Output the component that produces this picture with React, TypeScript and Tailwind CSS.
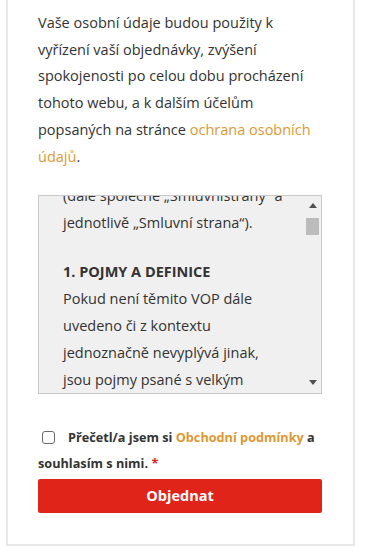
const Terms: React.FC = () => {
  return (
    <div className="flex h-[199px] border border-[#c9c9c9] bg-[#f0f0f0]">
      <div className="flex-1 overflow-hidden pl-[24px] pr-[24px]">
        <div className="-mt-[14px] text-[14.5px] leading-[27px] text-[#333]">
          <p className="whitespace-nowrap">(dále společně „Smluvnistrany“ a</p>
          <p>jednotlivě „Smluvní strana“).</p>
          <p className="mt-[22px] font-bold">1. POJMY A DEFINICE</p>
          <p>
            Pokud není těmito VOP dále uvedeno či z kontextu jednoznačně nevyplývá jinak, jsou
            pojmy psané s velkým počátečním písmenem vykládány takto:
          </p>
        </div>
      </div>
      <div className="flex w-[17px] flex-col items-center">
        <div className="flex h-[17px] w-full items-center justify-center pt-[1px]">
          <svg width="8" height="5" viewBox="0 0 8 5">
            <path d="M0 5 L4 0 L8 5 Z" fill="#505050" />
          </svg>
        </div>
        <div className="mt-[5px] h-[17px] w-[13px] bg-[#bcbcbc]" />
        <div className="flex-1" />
        <div className="flex h-[17px] w-full items-center justify-center pb-[4px]">
          <svg width="8" height="5" viewBox="0 0 8 5">
            <path d="M0 0 L8 0 L4 5 Z" fill="#505050" />
          </svg>
        </div>
      </div>
    </div>
  );
};

const App: React.FC = () => {
  return (
    <div
      className="min-h-[557px] bg-white"
      style={{ fontFamily: '"Open Sans", "Noto Sans", sans-serif' }}
    >
      <div className="ml-[6px] w-[349px] border-2 border-t-0 border-[#e8e8e8] pl-[30px] pr-[31px] pt-[10px] pb-[31px]">
        <p className="text-[14.5px] leading-[26.7px] text-[#333]">
          Vaše osobní údaje budou použity k vyřízení vaší objednávky, zvýšení spokojenosti po
          celou dobu procházení tohoto webu, a k dalším účelům popsaných na stránce{' '}
          <a href="#" className="text-[#dd9933]">
            ochrana osobních údajů
          </a>
          .
        </p>

        <div className="mt-[25px]">
          <Terms />
        </div>

        <p className="mt-[30px] text-[12.7px] font-bold leading-[26px] text-[#333]">
          <span className="ml-[4px] mr-[13px] inline-block h-[13px] w-[13px] translate-y-[2px] rounded-[3px] border border-[#6b6b6b] bg-white" />
          Přečetl/a jsem si{' '}
          <a href="#" className="text-[#dd9933]">
            Obchodní podmínky
          </a>{' '}
          a souhlasím s nimi. <span className="text-[#e2231a]">*</span>
        </p>

        <button className="mt-[3px] h-[34px] w-full rounded-[2px] bg-[#e0241a] text-[14.5px] font-bold text-white">
          Objednat
        </button>
      </div>
    </div>
  );
};

export default App;
